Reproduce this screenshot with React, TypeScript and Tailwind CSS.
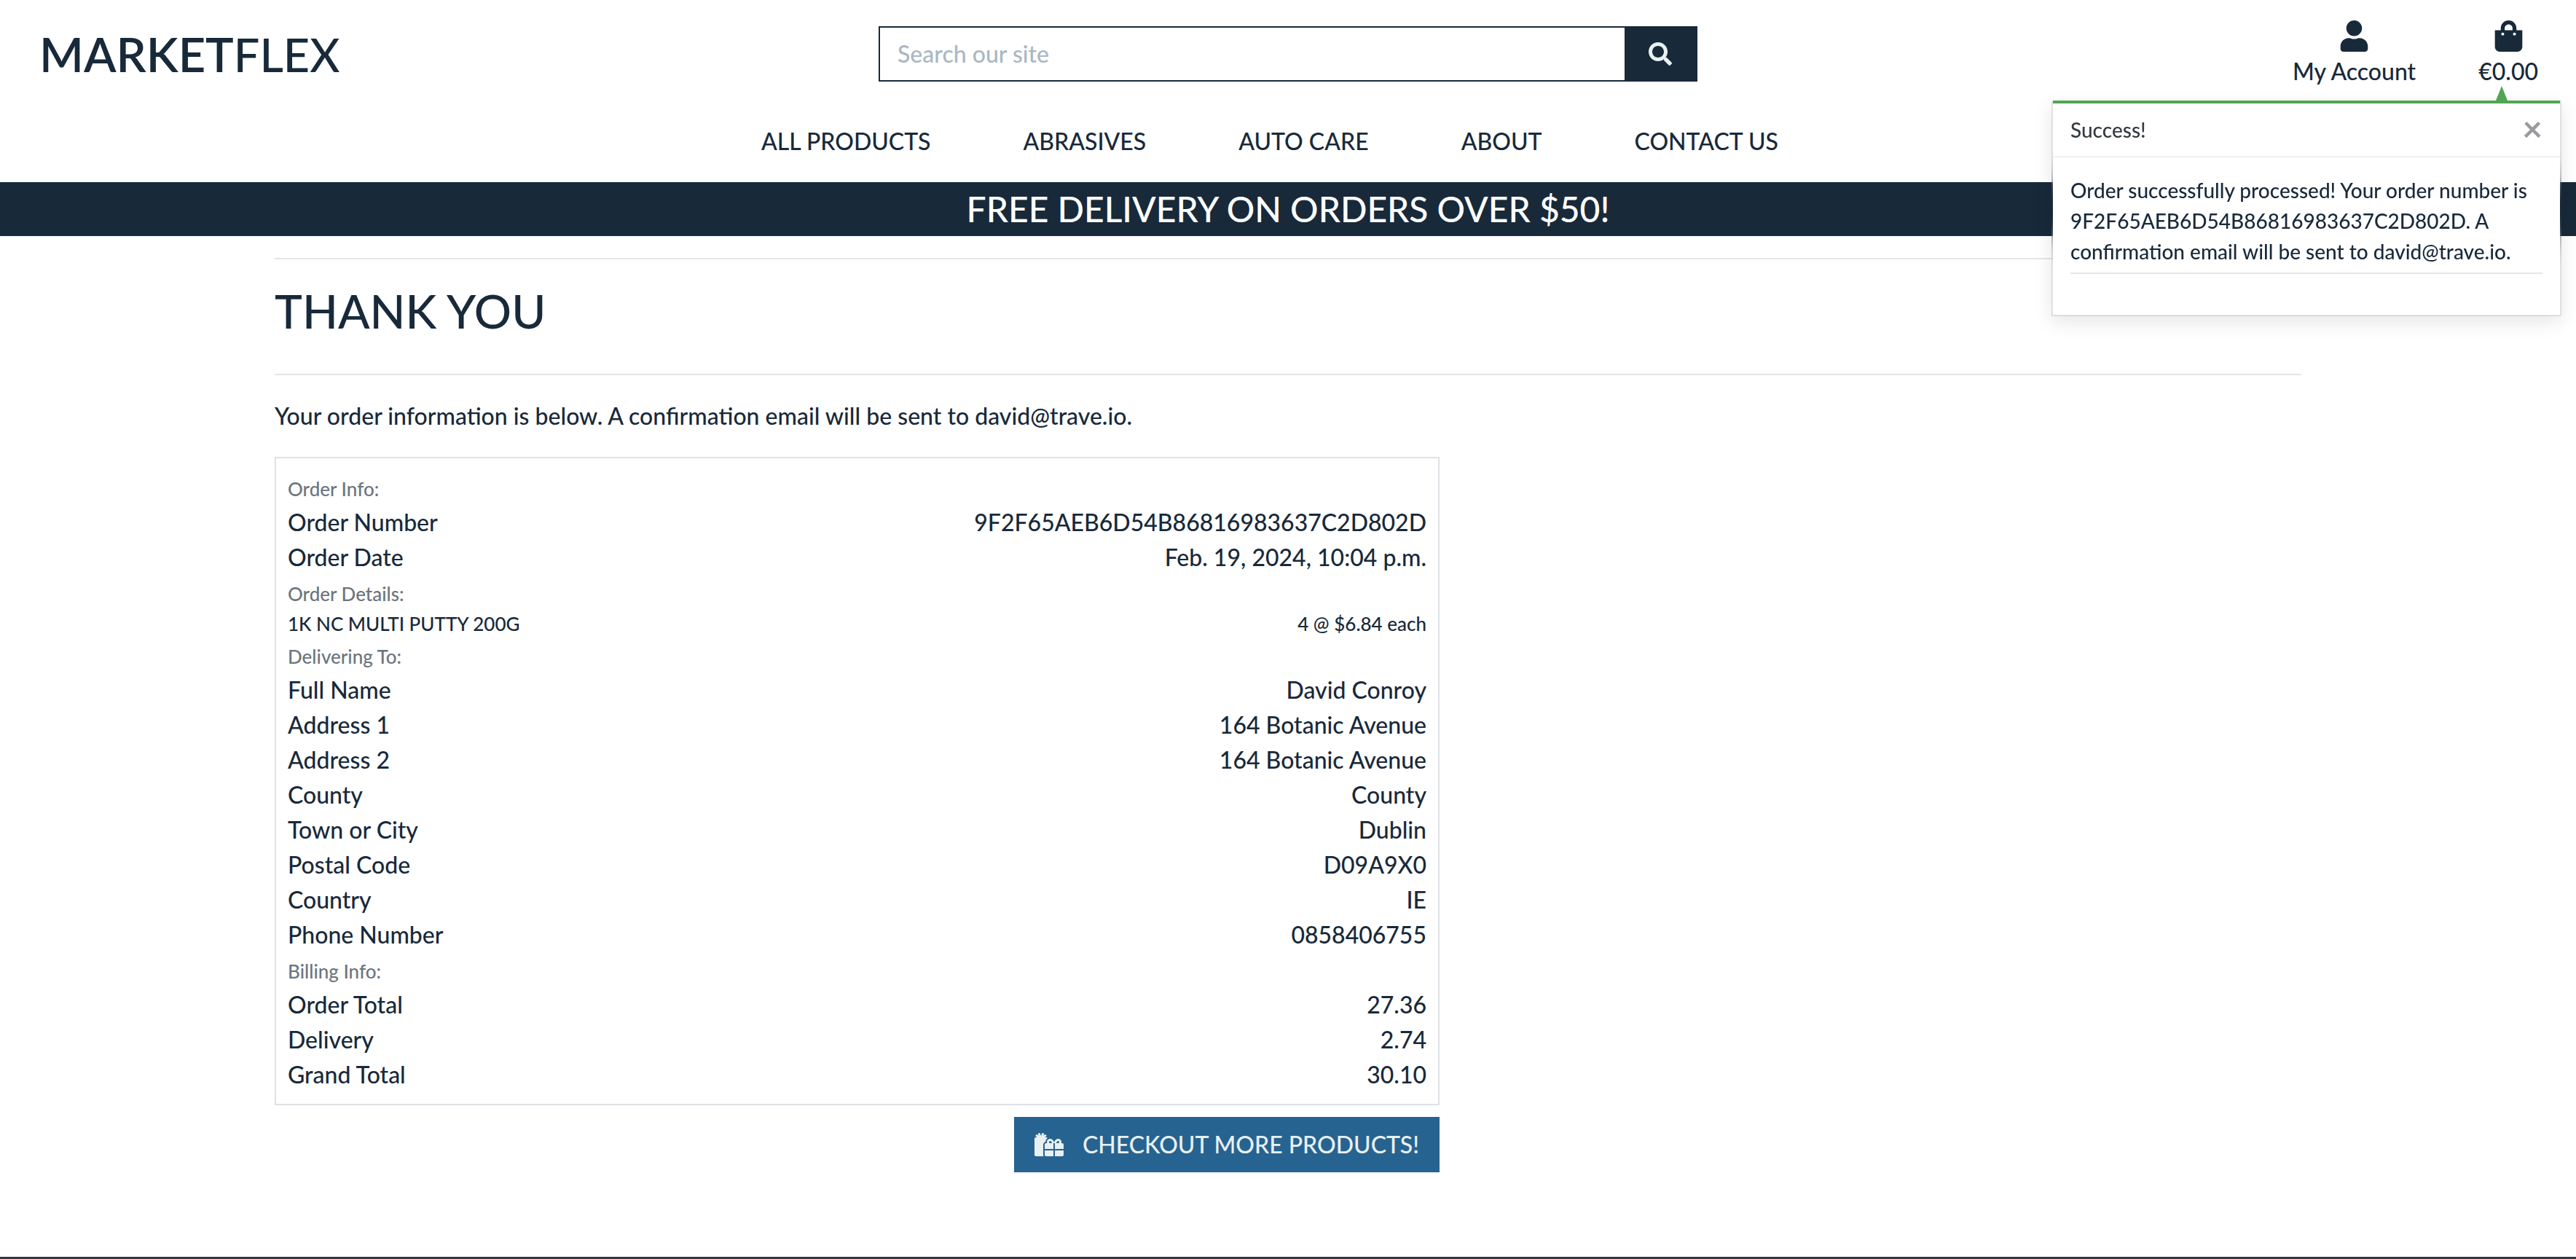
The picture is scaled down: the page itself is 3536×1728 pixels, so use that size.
import { FaGifts, FaSearch, FaShoppingBag, FaUser } from "react-icons/fa";

const navLinks = ["ALL PRODUCTS", "ABRASIVES", "AUTO CARE", "ABOUT", "CONTACT US"];

type Row = { label: string; value: string; small?: boolean };
type Section = { title: string; rows: Row[] };

const sections: Section[] = [
  {
    title: "Order Info:",
    rows: [
      { label: "Order Number", value: "9F2F65AEB6D54B86816983637C2D802D" },
      { label: "Order Date", value: "Feb. 19, 2024, 10:04 p.m." },
    ],
  },
  {
    title: "Order Details:",
    rows: [{ label: "1K NC MULTI PUTTY 200G", value: "4 @ $6.84 each", small: true }],
  },
  {
    title: "Delivering To:",
    rows: [
      { label: "Full Name", value: "David Conroy" },
      { label: "Address 1", value: "164 Botanic Avenue" },
      { label: "Address 2", value: "164 Botanic Avenue" },
      { label: "County", value: "County" },
      { label: "Town or City", value: "Dublin" },
      { label: "Postal Code", value: "D09A9X0" },
      { label: "Country", value: "IE" },
      { label: "Phone Number", value: "0858406755" },
    ],
  },
  {
    title: "Billing Info:",
    rows: [
      { label: "Order Total", value: "27.36" },
      { label: "Delivery", value: "2.74" },
      { label: "Grand Total", value: "30.10" },
    ],
  },
];

function Header() {
  return (
    <header>
      <div className="grid grid-cols-3 items-start gap-[60px] px-[22px] pt-7">
        <a href="#" className="pt-1.5 pl-8 text-[63px] leading-[80px]">
          <span className="text-[65px] font-semibold">MARKET</span>FLEX
        </a>
        <form className="mt-2 flex h-[76px] border-2 border-[#18293a]" role="search">
          <input
            type="text"
            aria-label="Search our site"
            placeholder="Search our site"
            className="min-w-0 flex-1 bg-white px-6 outline-none placeholder:text-[#aab7c4]"
          />
          <button
            type="button"
            aria-label="Search"
            className="flex w-[98px] items-center justify-center bg-[#18293a] text-[#e8f0f2]"
          >
            <FaSearch />
          </button>
        </form>
        <div className="flex justify-end gap-[86px] pr-[30px]">
          <a href="#" className="flex flex-col items-center gap-[3px]">
            <FaUser className="size-[43px]" />
            <span>My Account</span>
          </a>
          <a href="#" className="flex flex-col items-center gap-[3px]">
            <FaShoppingBag className="size-[43px]" />
            <span>€0.00</span>
          </a>
        </div>
      </div>
      <nav className="mt-12 flex justify-center gap-[127px] pr-[50px] pb-8">
        {navLinks.map((link) => (
          <a key={link} href="#">
            {link}
          </a>
        ))}
      </nav>
      <div className="bg-[#18293a] py-2 text-center text-white">
        <h4 className="text-5xl leading-[58px]">FREE DELIVERY ON ORDERS OVER $50!</h4>
      </div>
    </header>
  );
}

function Toast() {
  return (
    <div
      role="alert"
      className="absolute top-[138px] right-5 w-[700px] border-x-2 border-b-2 border-black/10 bg-white bg-clip-padding text-[28px] leading-[42px] shadow-[0_8px_24px_rgba(0,0,0,0.1)] backdrop-blur-[20px]"
    >
      <div className="absolute -top-5 right-[72px] border-x-8 border-b-20 border-x-transparent border-b-[#51a551]" />
      <div className="h-1 bg-[#51a551]" />
      <div className="flex h-[74px] items-center justify-between border-b-2 border-black/5 px-6">
        <strong className="font-medium text-[#343a40]">Success!</strong>
        <button type="button" aria-label="Close" className="pb-1 text-5xl leading-none font-bold text-[#999b9e]">
          ×
        </button>
      </div>
      <div className="px-6 pt-6 pb-14">
        <p>
          Order successfully processed! Your order number is 9F2F65AEB6D54B86816983637C2D802D. A confirmation email
          will be sent to david@trave.io.
        </p>
        <hr className="mt-2 border-t-2 border-black/10" />
      </div>
    </div>
  );
}

function OrderSummary() {
  return (
    <div className="border-2 border-[#dee2e6] p-4">
      {sections.map((section) => (
        <section key={section.title}>
          <h3>
            <small className="text-[26px] leading-none text-[#6c757d]">{section.title}</small>
          </h3>
          <dl>
            {section.rows.map((row) => (
              <div
                key={row.label}
                className={row.small ? "flex justify-between text-[26px] leading-[38px]" : "flex justify-between"}
              >
                <dt>{row.label}</dt>
                <dd>{row.value}</dd>
              </div>
            ))}
          </dl>
        </section>
      ))}
    </div>
  );
}

export default function App() {
  return (
    <div className="relative flex h-screen flex-col overflow-hidden bg-white font-['Lato',sans-serif] text-[32px] leading-[48px] font-medium text-[#18293a]">
      <Header />
      <main className="mx-auto w-full max-w-[2842px] flex-1 px-[30px] pt-[30px]">
        <hr className="border-t-2 border-black/10" />
        <h2 className="mt-8 mb-12 text-[64px] leading-[77px]">THANK YOU</h2>
        <hr className="border-t-2 border-black/10" />
        <p className="my-8">Your order information is below. A confirmation email will be sent to david@trave.io.</p>
        <div className="w-[1599px]">
          <OrderSummary />
          <div className="mt-4 flex justify-end">
            <a href="#" className="flex h-[76px] items-center gap-[26px] bg-[#276390] px-7 text-[#e8f0f2]">
              <FaGifts className="h-8 w-10" />
              CHECKOUT MORE PRODUCTS!
            </a>
          </div>
        </div>
      </main>
      <footer className="h-[3px] bg-[#343741]" />
      <Toast />
    </div>
  );
}
